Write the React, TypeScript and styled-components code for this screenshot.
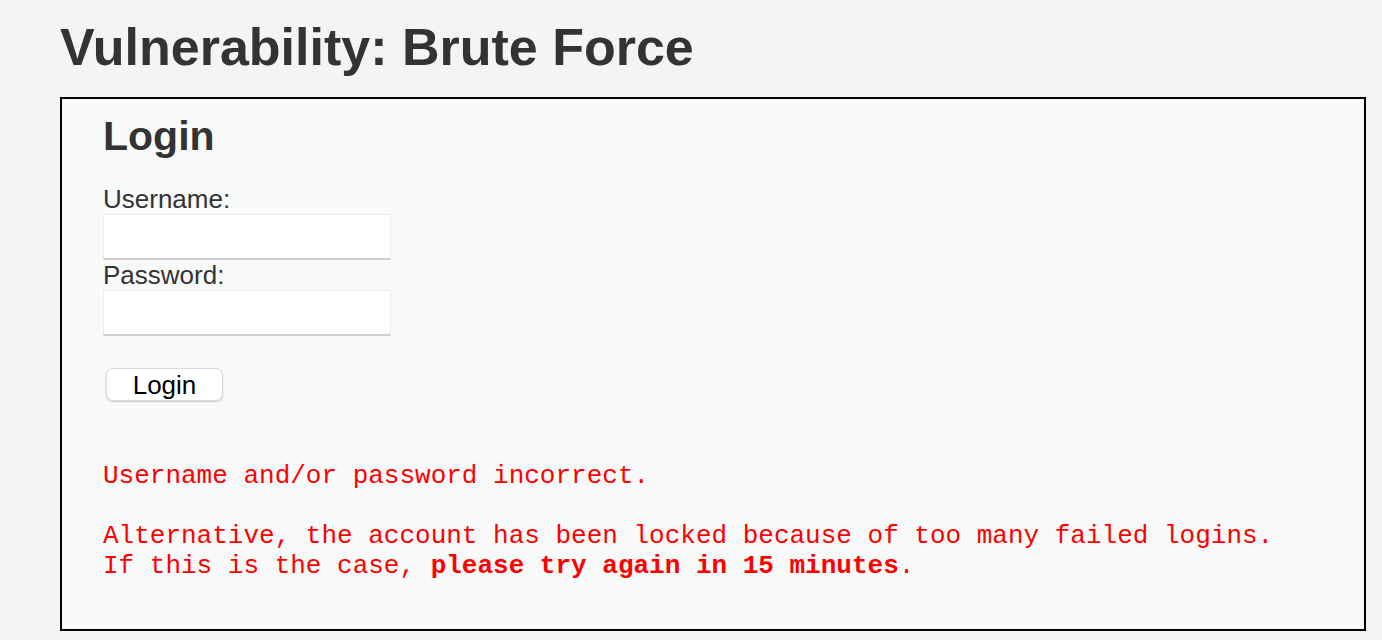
import React from "react";
import styled, { createGlobalStyle } from "styled-components";

const Global = createGlobalStyle`
  html, body {
    margin: 0;
    padding: 0;
    background: #f4f4f4;
  }
  body {
    font-family: "Liberation Sans", Arial, Helvetica, sans-serif;
    color: #333;
  }
`;

const Page = styled.div`
  padding: 17px 16px 0 60px;
`;

const Title = styled.h1`
  margin: 0 0 20px 0;
  font-size: 52px;
  line-height: 60px;
  font-weight: bold;
  color: #333;
`;

const Area = styled.div`
  border: 2px solid #000;
  background: #f8f9f9;
  padding: 14px 40px 48px 41px;
`;

const Heading = styled.h2`
  margin: 0 0 25px 0;
  font-size: 41px;
  line-height: 46px;
  font-weight: bold;
  color: #333;
`;

const Form = styled.form`
  display: flex;
  flex-direction: column;
  align-items: flex-start;
`;

const Label = styled.label`
  font-size: 26px;
  line-height: 30px;
  color: #333;
`;

const Field = styled.input`
  box-sizing: border-box;
  width: 288px;
  height: 46px;
  margin: 0;
  background: #fff;
  border: 1px solid #ececec;
  border-bottom: 2px solid #cfcfcf;
  outline: none;
`;

const Button = styled.button`
  box-sizing: border-box;
  margin: 32px 0 0 3px;
  width: 117px;
  height: 33px;
  background: #fff;
  border: 1px solid #dadada;
  border-radius: 7px;
  box-shadow: 0 1px 2px rgba(0, 0, 0, 0.18);
  font-family: "Liberation Sans", Arial, Helvetica, sans-serif;
  font-size: 26px;
  line-height: 30px;
  color: #000;
  padding: 0;
`;

const Message = styled.pre`
  margin: 60px 0 0 0;
  font-family: "Liberation Mono", "Courier New", monospace;
  font-size: 26px;
  line-height: 30px;
  color: #ff0000;
  white-space: pre;
`;

const Strong = styled.b`
  font-weight: bold;
`;

export default function App() {
  return (
    <>
      <Global />
      <Page>
        <Title>Vulnerability: Brute Force</Title>
        <Area>
          <Heading>Login</Heading>
          <Form onSubmit={(e) => e.preventDefault()}>
            <Label>Username:</Label>
            <Field type="text" />
            <Label>Password:</Label>
            <Field type="password" />
            <Button type="submit">Login</Button>
          </Form>
          <Message>
            {"Username and/or password incorrect.\n\nAlternative, the account has been locked because of too many failed logins.\nIf this is the case, "}
            <Strong>please try again in 15 minutes</Strong>
            {"."}
          </Message>
        </Area>
      </Page>
    </>
  );
}
